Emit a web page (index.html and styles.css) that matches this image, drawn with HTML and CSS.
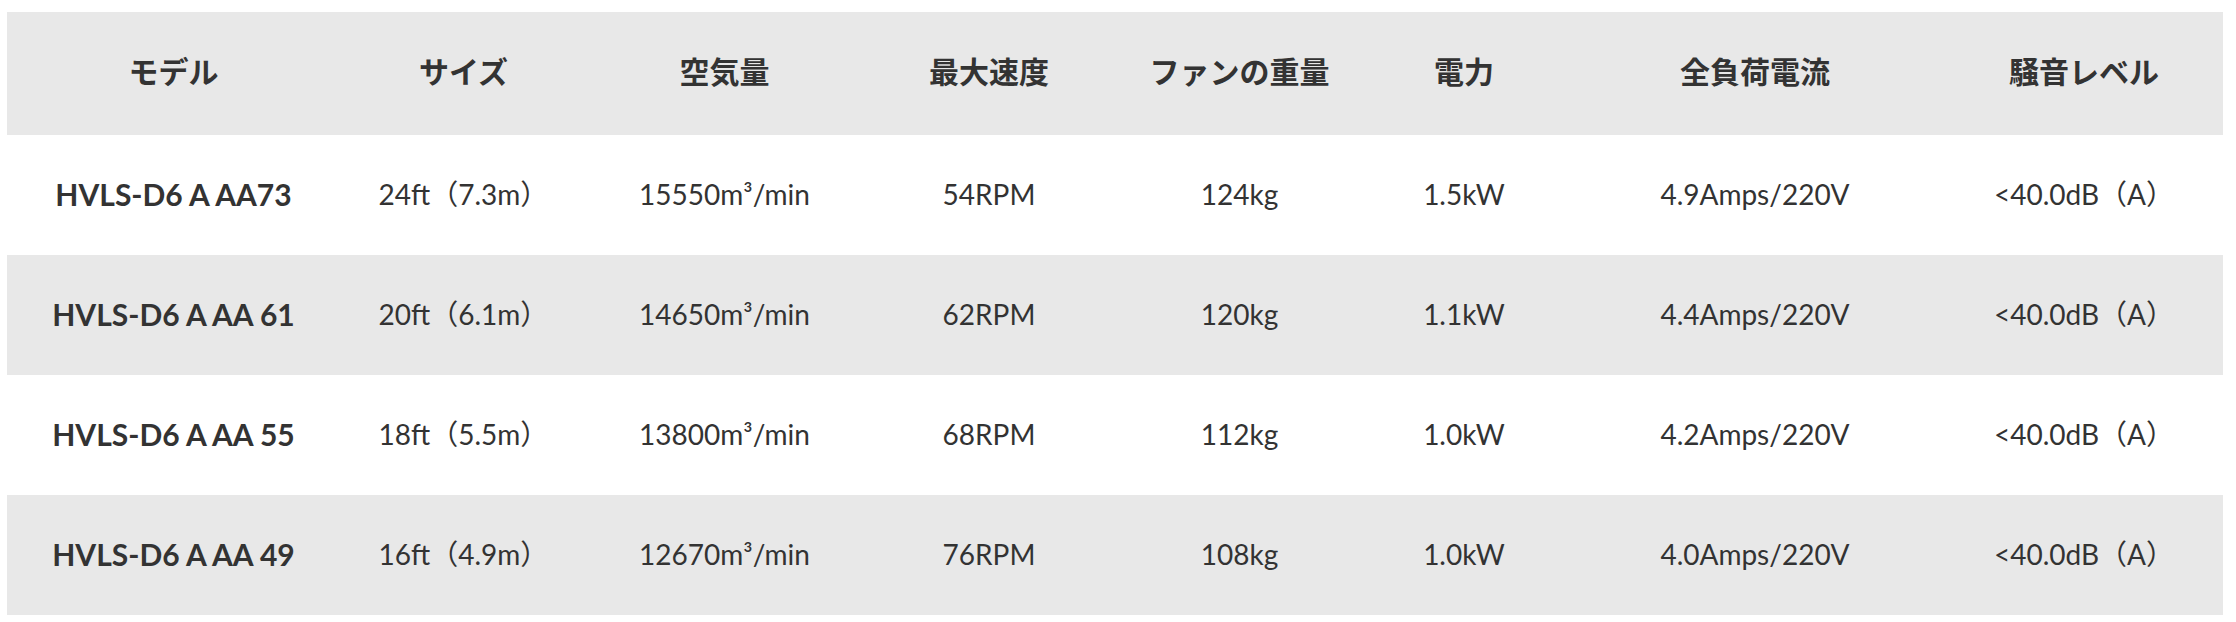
FILE: index.html
```html
<!DOCTYPE html>
<html lang="ja">
<head>
<meta charset="utf-8">
<title>Spec table</title>
<link rel="stylesheet" href="styles.css">
</head>
<body>
<div class="wrap">
<table class="spec">
  <colgroup>
    <col class="c1"><col class="c2"><col class="c3"><col class="c4">
    <col class="c5"><col class="c6"><col class="c7"><col class="c8">
  </colgroup>
  <thead>
    <tr>
      <th>モデル</th><th>サイズ</th><th>空気量</th><th>最大速度</th>
      <th>ファンの重量</th><th>電力</th><th>全負荷電流</th><th>騒音レベル</th>
    </tr>
  </thead>
  <tbody>
    <tr>
      <td class="model">HVLS-D6 A AA73</td><td>24ft（7.3m）</td><td>15550m³/min</td><td>54RPM</td>
      <td>124kg</td><td>1.5kW</td><td>4.9Amps/220V</td><td>&lt;40.0dB（A）</td>
    </tr>
    <tr>
      <td class="model">HVLS-D6 A AA 61</td><td>20ft（6.1m）</td><td>14650m³/min</td><td>62RPM</td>
      <td>120kg</td><td>1.1kW</td><td>4.4Amps/220V</td><td>&lt;40.0dB（A）</td>
    </tr>
    <tr>
      <td class="model">HVLS-D6 A AA 55</td><td>18ft（5.5m）</td><td>13800m³/min</td><td>68RPM</td>
      <td>112kg</td><td>1.0kW</td><td>4.2Amps/220V</td><td>&lt;40.0dB（A）</td>
    </tr>
    <tr>
      <td class="model">HVLS-D6 A AA 49</td><td>16ft（4.9m）</td><td>12670m³/min</td><td>76RPM</td>
      <td>108kg</td><td>1.0kW</td><td>4.0Amps/220V</td><td>&lt;40.0dB（A）</td>
    </tr>
  </tbody>
</table>
</div>
</body>
</html>
```
FILE: styles.css
```css
html, body {
  margin: 0;
  padding: 0;
  background: #ffffff;
}
.wrap {
  padding: 12px 13px 0 7px;
}
.spec {
  width: 2216px;
  table-layout: fixed;
  border-collapse: collapse;
  border-spacing: 0;
  font-family: "Lato", "Noto Sans CJK JP", sans-serif;
  color: #333333;
}
.c1 { width: 333px; }
.c2 { width: 247px; }
.c3 { width: 275px; }
.c4 { width: 254px; }
.c5 { width: 247px; }
.c6 { width: 202px; }
.c7 { width: 380px; }
.c8 { width: 278px; }
.spec th,
.spec td {
  padding: 0;
  text-align: center;
  vertical-align: middle;
  white-space: nowrap;
  line-height: 36px;
}
.spec thead tr {
  height: 123px;
  background: #e8e8e8;
}
.spec th {
  padding-bottom: 8px;
  font-family: "Noto Sans CJK JP", sans-serif;
  font-size: 30px;
  font-weight: 700;
}
.spec tbody tr {
  height: 120px;
}
.spec td {
  padding-bottom: 3px;
  font-size: 28px;
  font-weight: 400;
}
.spec tbody tr:nth-child(even) {
  background: #e8e8e8;
}
.spec td.model {
  font-size: 30px;
  font-weight: 700;
}
```
